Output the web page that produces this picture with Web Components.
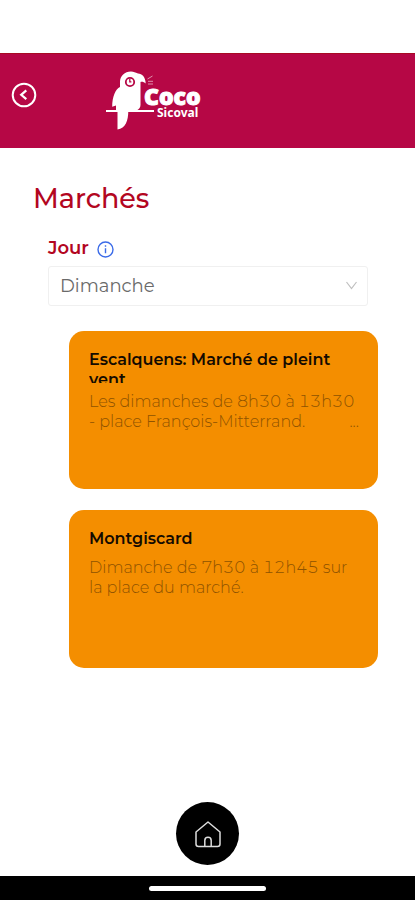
<!DOCTYPE html>
<html lang="fr">
<head>
<meta charset="utf-8">
<meta name="viewport" content="width=device-width, initial-scale=1">
<title>Marchés – Coco Sicoval</title>
<style>
body { margin: 0; background: #fff; font-family: Montserrat, Inter, sans-serif; font-variant-numeric: tabular-nums; }
</style>
</head>
<body>
<coco-app>
  <coco-header slot="header"></coco-header>
  <day-picker></day-picker>
  <market-list>
    <market-card>
      <span slot="title">Escalquens: Marché de pleint vent</span>
      Les dimanches de 8h30 à 13h30 <span>- place François-Mitterrand.</span>
      <span slot="more">...</span>
    </market-card>
    <market-card>
      <span slot="title">Montgiscard</span>
      Dimanche de 7h30 à 12h45 sur la place du marché.
    </market-card>
  </market-list>
  <home-button slot="footer"></home-button>
  <system-bar slot="footer"></system-bar>
</coco-app>
<script>
function define(name, html) {
  customElements.define(name, class extends HTMLElement {
    constructor() {
      super();
      this.attachShadow({ mode: "open" }).innerHTML = html;
    }
  });
}

define("coco-app", `
<style>
:host { display: flex; flex-direction: column; min-height: 100vh; padding-top: 53px; box-sizing: border-box; }
main { flex: 1; padding: 33px 33px 20px; }
h1 { margin: 0; font-size: 27px; line-height: 36px; font-weight: 500; color: #b3061f; }
footer { display: flex; flex-direction: column; gap: 11px; }
</style>
<slot name="header"></slot>
<main><h1>Marchés</h1><slot></slot></main>
<footer><slot name="footer"></slot></footer>`);

define("coco-header", `
<style>
:host { display: block; }
header { display: flex; align-items: flex-start; height: 95px; box-sizing: border-box; padding: 17px 11px 0; gap: 69px; background: #b60745; border-top: 1px solid #a80a24; }
button { margin: 11px 0 0; padding: 0; border: 0; background: none; width: 26px; height: 26px; cursor: pointer; }
svg { display: block; }
</style>
<header>
  <button type="button" aria-label="Retour">
    <svg width="26" height="26" viewBox="0 0 26 26" fill="none" stroke="#fff" stroke-width="2"><circle cx="13" cy="13" r="11.3"/><path d="M15.3 8.4 10.2 12.8l5.100 4.400" stroke-width="2.200"/></svg>
  </button>
  <svg width="98" height="60" viewBox="0 0 98 60" role="img" aria-label="Coco Sicoval">
    <path fill="#fff" d="M14 11C14 5 19 .5 25 .6c3 0 4 1.400 7 1.800 4 .5 7.500 3 7.700 10.200-1.700-1.800-3.400-2-5.200-1.700V34c0 2.500-1.500 4.500-4 5.500h-8.200C22.300 50 19.500 57.500 11.500 58.500V39.500H10V34.500l-3.800 1.200C6.200 26 9.500 18 14 16Z"/>
    <path stroke="#fff" stroke-width="2" d="M0 40h48"/>
    <circle cx="24" cy="11" r="4.200" fill="#fff" stroke="#b60745" stroke-width="1.800"/>
    <path d="M23.800 8v2.800h1.600" fill="none" stroke="#b60745" stroke-width="1.300"/>
    <path d="m41.500 8 5-3M42 10.300h5M42 13h5" stroke="#fff" stroke-width=".8" opacity=".7"/>
    <g fill="#fff" font-family="Noto Sans, sans-serif"><text x="38" y="34" font-size="23" font-weight="900" stroke="#fff" stroke-width="1">Coco</text><text x="51" y="46" font-size="12" font-weight="700">Sicoval</text></g>
  </svg>
</header>`);

define("day-picker", `
<style>
:host { display: block; margin: 18px 14px 0 15px; }
.head { display: flex; align-items: center; gap: 8px; height: 26px; }
label { font-size: 18px; line-height: 26px; font-weight: 600; color: #b3061f; }
.info { padding: 0; border: 0; background: none; width: 17px; height: 17px; margin-top: 3px; }
svg { display: block; }
.field { display: grid; align-items: center; margin-top: 5px; }
select { grid-area: 1 / 1; appearance: none; width: 100%; height: 40px; padding: 0 32px 0 11px; border: 1px solid #f0f0f0; border-radius: 3px; background: #fff; font: 400 18px/26px Montserrat, Inter, sans-serif; color: #6a6a6a; }
.field svg { grid-area: 1 / 1; justify-self: end; margin-right: 10px; pointer-events: none; }
</style>
<div class="head">
  <label for="day">Jour</label>
  <button class="info" type="button" aria-label="Information">
    <svg width="17" height="17" viewBox="0 0 17 17" fill="none" stroke="#3b6be8" stroke-width="1.400"><circle cx="8.500" cy="8.500" r="7.500"/><path d="M8.500 7.300v5M8.500 4.300v1.500"/></svg>
  </button>
</div>
<div class="field">
  <select id="day"><option>Lundi</option><option>Mardi</option><option>Mercredi</option><option>Jeudi</option><option>Vendredi</option><option>Samedi</option><option selected>Dimanche</option></select>
  <svg width="13" height="12" viewBox="0 0 13 12" fill="none" stroke="#bfbfbf" stroke-width="1.200"><path d="m1.500 2 5 6.500 5-6.500"/></svg>
</div>`);

define("market-list", `
<style>
:host { display: flex; flex-direction: column; gap: 21px; margin: 25px 4px 0 36px; }
</style>
<slot></slot>`);

define("market-card", `
<style>
:host { display: block; }
article { min-height: 158px; box-sizing: border-box; padding: 19px 19px 18px 20px; border-radius: 15px; background: #f48e00; }
h2 { margin: 0 0 9px; max-height: 33px; overflow: hidden; font-size: 16px; line-height: 20px; font-weight: 600; color: #140b00; }
p { margin: 0; font-size: 16px; line-height: 20px; font-weight: 300; color: #8f5300; }
.more { float: right; }
</style>
<article>
  <h2><slot name="title"></slot></h2>
  <p><slot></slot><span class="more"><slot name="more"></slot></span></p>
</article>`);

define("home-button", `
<style>
:host { display: flex; justify-content: center; }
a { display: grid; place-items: center; width: 63px; height: 63px; border-radius: 50%; background: #000; }
svg { display: block; }
</style>
<a href="#" aria-label="Accueil"><svg width="28" height="28" viewBox="0 0 28 28" fill="none" stroke="#ddd" stroke-width="1.500" stroke-linejoin="round"><path d="M2 12 14 2l12 10v12q0 2.500-2.500 2.500h-19Q2 26.500 2 24Z"/><path d="M10.800 26.500v-6q0-3.200 3.200-3.200t3.200 3.200v6"/></svg></a>`);

define("system-bar", `
<style>
:host { display: flex; justify-content: center; align-items: center; height: 24px; background: #000; }
span { width: 28%; height: 5px; border-radius: 3px; background: #fff; }
</style>
<span></span>`);
</script>
</body>
</html>
